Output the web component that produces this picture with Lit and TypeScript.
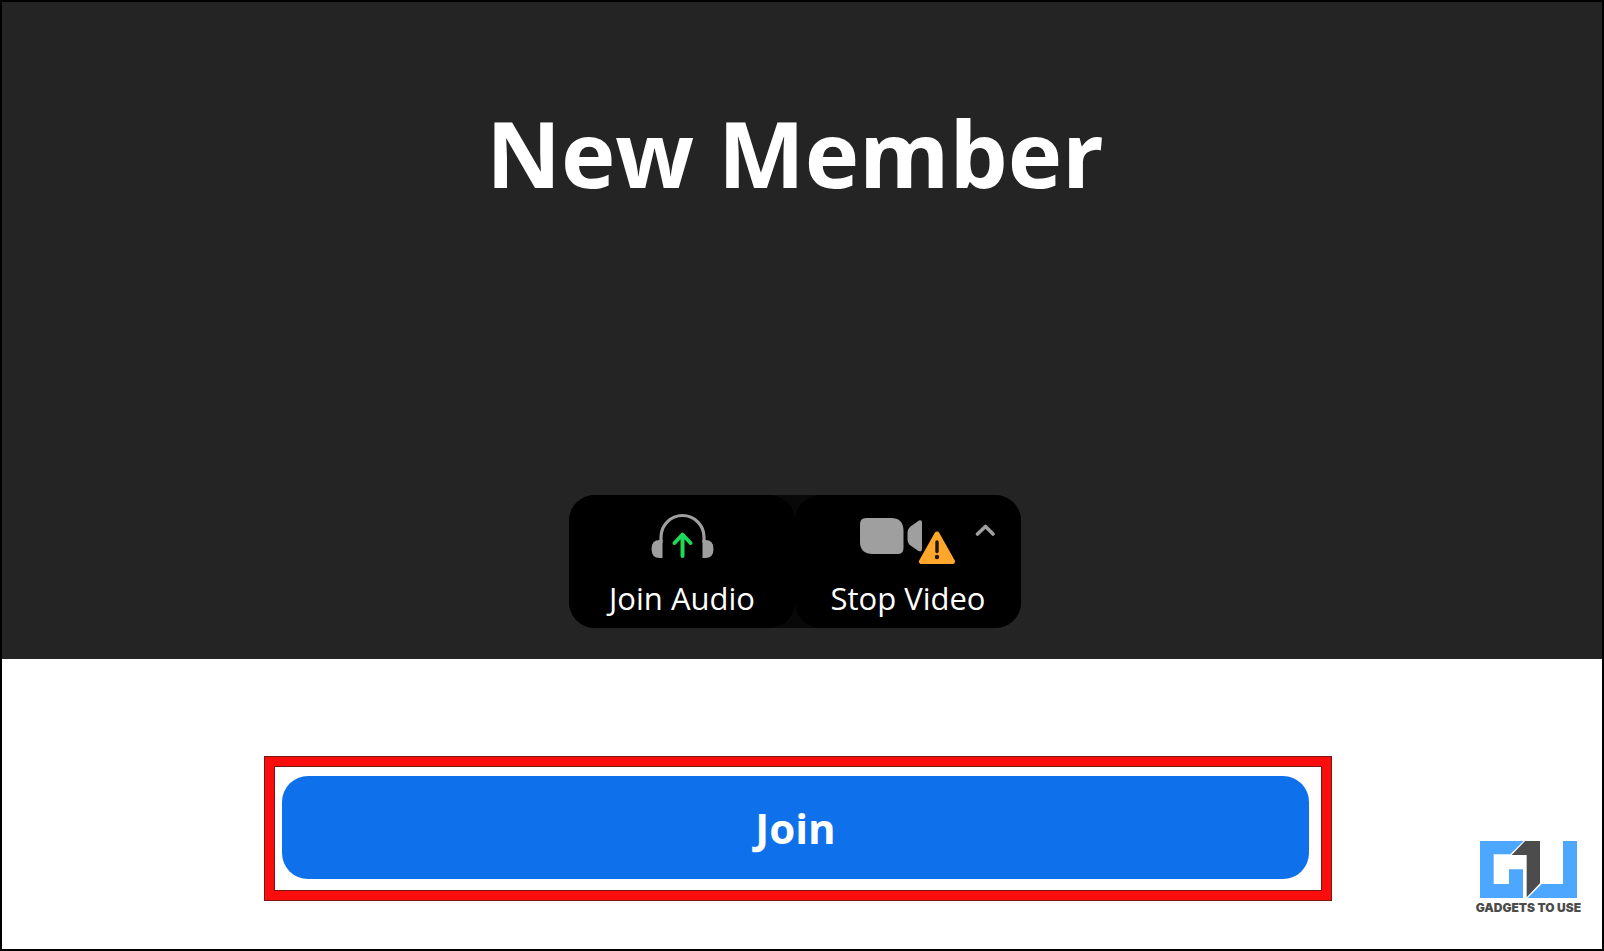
import { LitElement, html, css } from "lit";
import { customElement } from "lit/decorators.js";

@customElement("app-root")
export class AppRoot extends LitElement {
  static styles = css`
    :host {
      display: block;
      font-family: "Open Sans", "Noto Sans", sans-serif;
      color: #fff;
    }
    .frame {
      box-sizing: border-box;
      position: relative;
      display: flex;
      flex-direction: column;
      min-height: 100vh;
      border: 2px solid #000;
      background: #fff;
    }
    .preview {
      flex: 1;
      display: flex;
      flex-direction: column;
      align-items: center;
      justify-content: space-between;
      gap: 32px;
      padding: 87px 14px 31px 0;
      background: #242424;
    }
    .name {
      margin: 0;
      font-size: 92px;
      line-height: 128px;
      font-weight: 700;
      text-align: center;
    }
    .controls {
      display: grid;
      grid-template-columns: 1fr 1fr;
      border-radius: 26px;
      background: #080808;
    }
    .cell {
      position: relative;
      display: grid;
    }
    button {
      border: 0;
      margin: 0;
      font: inherit;
      color: inherit;
      cursor: pointer;
    }
    .control {
      display: flex;
      flex-direction: column;
      align-items: center;
      gap: 10px;
      min-width: 226px;
      padding: 18px 24px 9px;
      border-radius: 26px;
      background: #000;
      font-size: 31px;
      line-height: 42px;
    }
    .more {
      position: absolute;
      top: 24px;
      right: 22px;
      padding: 4px;
      background: none;
      line-height: 0;
    }
    .actions {
      display: flex;
      justify-content: center;
      padding: 97px 8px 48px;
    }
    .highlight {
      box-sizing: border-box;
      display: grid;
      width: 100%;
      max-width: 1068px;
      margin-right: 8px;
      border: 1px solid #7a1512;
      background: #fa0d0d;
      padding: 9px;
    }
    .inner {
      display: grid;
      border: 1px solid #7a1512;
      background: #fff;
      padding: 9px 12px 11px 7px;
    }
    .join {
      padding: 22px;
      border-radius: 26px;
      background: #0e71eb;
      font-size: 42px;
      line-height: 59px;
      font-weight: 700;
    }
    .brand {
      position: absolute;
      right: 21px;
      bottom: 34px;
      display: flex;
      flex-direction: column;
      align-items: center;
      gap: 3px;
      color: #4c4c4c;
      font: 900 12px/14px Inter, "Liberation Sans", sans-serif;
      text-decoration: none;
    }
    svg {
      display: block;
    }
  `;

  render() {
    return html`
      <main class="frame">
        <section class="preview">
          <h1 class="name">New Member</h1>
          <div class="controls">
            <div class="cell">
              <button class="control" type="button">
                <svg width="64" height="54" viewBox="0 0 64 54" fill="none" aria-hidden="true">
                  <path d="M11 30V24a21.5 21.5 0 0 1 43 0V30" stroke="#9f9f9f" stroke-width="3.2" />
                  <path d="M12.500 27H9.500Q1.500 27 1.500 36Q1.500 45 9.500 45H12.500Z M52.500 27H55.500Q63.500 27 63.500 36Q63.500 45 55.500 45H52.500Z" fill="#9f9f9f" />
                  <path d="M32.500 43V22M24.500 30L32.500 21.500L40.500 30" stroke="#20d858" stroke-width="4" stroke-linecap="round" stroke-linejoin="round" />
                </svg>
                Join Audio
              </button>
            </div>
            <div class="cell">
              <button class="control" type="button">
                <svg width="96" height="54" viewBox="0 0 96 54" aria-hidden="true">
                  <path d="M6 5H31Q43.500 5 43.500 18V35Q43.500 41 37.500 41H13Q0 41 0 29V11Q0 5 6 5Z" fill="#9f9f9f" />
                  <path d="M59 7.500Q62 6.500 62 9.500V36Q62 39.500 58.500 38L50.500 32.500Q47.500 30 47.500 26V19Q47.500 16 50.500 13.500Z" fill="#9f9f9f" />
                  <path d="M77 21L61.500 48.500H92.500Z" fill="#ffa62b" stroke="#ffa62b" stroke-width="5" stroke-linejoin="round" />
                  <path d="M77 29V38.500" stroke="#1c1608" stroke-width="3.400" stroke-linecap="round" />
                  <circle cx="77" cy="44" r="2.200" fill="#1c1608" />
                </svg>
                Stop Video
              </button>
              <button class="more" type="button" aria-label="Video options">
                <svg width="20" height="14" viewBox="0 0 20 14" fill="none" aria-hidden="true">
                  <path d="M2.500 11L10.500 3.500L18 11" stroke="#9f9f9f" stroke-width="3.600" stroke-linecap="round" stroke-linejoin="round" />
                </svg>
              </button>
            </div>
          </div>
        </section>
        <section class="actions">
          <div class="highlight">
            <div class="inner">
              <button class="join" type="button">Join</button>
            </div>
          </div>
        </section>
        <a class="brand" href="#">
          <svg width="97" height="57" viewBox="57 33 291 171" aria-hidden="true">
            <path d="M57 33H188L148 73H98V162H144V118H186V204H57Z M242 162H306V33H348V204H200Z" fill="#4da6ff" />
            <path d="M192 33H237V160L197 202V75H152Z" fill="#4c4c4c" />
          </svg>
          GADGETS TO USE
        </a>
      </main>
    `;
  }
}
